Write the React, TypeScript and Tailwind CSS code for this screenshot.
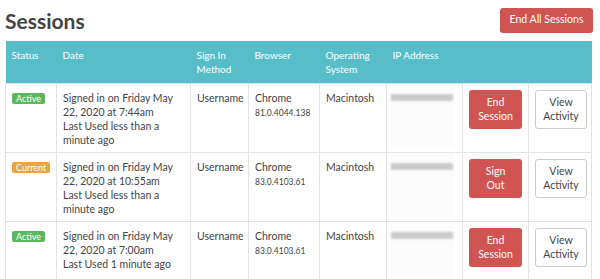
import React from 'react'

type Session = {
  status: 'Active' | 'Current'
  signedIn: string
  lastUsed: string
  version: string
  action: string
}

const sessions: Session[] = [
  {
    status: 'Active',
    signedIn: 'Signed in on Friday May 22, 2020 at 7:44am',
    lastUsed: 'Last Used less than a minute ago',
    version: '81.0.4044.138',
    action: 'End Session',
  },
  {
    status: 'Current',
    signedIn: 'Signed in on Friday May 22, 2020 at 10:55am',
    lastUsed: 'Last Used less than a minute ago',
    version: '83.0.4103.61',
    action: 'Sign Out',
  },
  {
    status: 'Active',
    signedIn: 'Signed in on Friday May 22, 2020 at 7:00am',
    lastUsed: 'Last Used 1 minute ago',
    version: '83.0.4103.61',
    action: 'End Session',
  },
]

const cell = 'border border-[#e3e3e3] px-[6px] pt-[7px] pb-[4px] align-top'
const th = 'px-[6px] pt-[7px] align-top font-normal'

const App = () => {
  return (
    <div className="min-h-screen bg-white pl-[5px] pr-[8px] text-[#444] font-['Lato','Open_Sans',sans-serif]">
      <div className="flex h-[41px] items-center justify-between pb-[1px]">
        <h1 className="text-[21px] font-bold leading-none text-[#444]">Sessions</h1>
        <button className="mr-[-1px] h-[25px] w-[93px] rounded-[3px] bg-[#d05452] text-[10.5px] text-white">
          End All Sessions
        </button>
      </div>

      <table className="w-full table-fixed border-collapse text-[10.5px] leading-[14.25px]">
        <colgroup>
          <col className="w-[51px]" />
          <col className="w-[134px]" />
          <col className="w-[58px]" />
          <col className="w-[71px]" />
          <col className="w-[67px]" />
          <col className="w-[76px]" />
          <col className="w-[66px]" />
          <col />
        </colgroup>
        <thead>
          <tr className="h-[42px] bg-[#57bec9] text-left text-[10px] text-white">
            <th className={th}>Status</th>
            <th className={th}>Date</th>
            <th className={th}>Sign In Method</th>
            <th className={th}>Browser</th>
            <th className={th}>Operating System</th>
            <th className={th}>IP Address</th>
            <th />
            <th />
          </tr>
        </thead>
        <tbody>
          {sessions.map((s, i) => (
            <tr key={i} className="h-[69px]">
              <td className={cell}>
                <span
                  className={
                    'mt-[2px] inline-block rounded-[2px] px-[4px] text-[9px] leading-[11px] text-white ' +
                    (s.status === 'Current' ? 'bg-[#eea43c]' : 'bg-[#5cb85c]')
                  }
                >
                  {s.status}
                </span>
              </td>
              <td className={cell}>
                <div>{s.signedIn}</div>
                <div>{s.lastUsed}</div>
              </td>
              <td className={cell}>Username</td>
              <td className={cell}>
                <div>Chrome</div>
                <div className="mt-[1px] text-[8.5px] leading-[14px]">{s.version}</div>
              </td>
              <td className={cell}>Macintosh</td>
              <td className="border border-[#e3e3e3] px-[4px] pt-[1px] pb-0 align-top">
                <div className="h-[62px] w-[63px] rounded-[2px] bg-[#fdfcfc] pt-[9px] shadow-[0_0_1px_rgba(0,0,0,0.06)]">
                  <div className="h-[7px] w-[62px] bg-[#cbcbcb] blur-[1.2px]" />
                </div>
              </td>
              <td className={cell}>
                <button className="-mt-[1px] h-[39px] w-[53px] rounded-[3px] bg-[#d05452] text-[10.5px] leading-[14px] text-white">
                  {s.action.split(' ')[0]}
                  <br />
                  {s.action.split(' ')[1]}
                </button>
              </td>
              <td className={cell}>
                <button className="-mt-[1px] h-[39px] w-[52px] rounded-[3px] border border-[#ccc] bg-white text-[10.5px] leading-[14px] text-[#444]">
                  View
                  <br />
                  Activity
                </button>
              </td>
            </tr>
          ))}
        </tbody>
      </table>
    </div>
  )
}

export default App
